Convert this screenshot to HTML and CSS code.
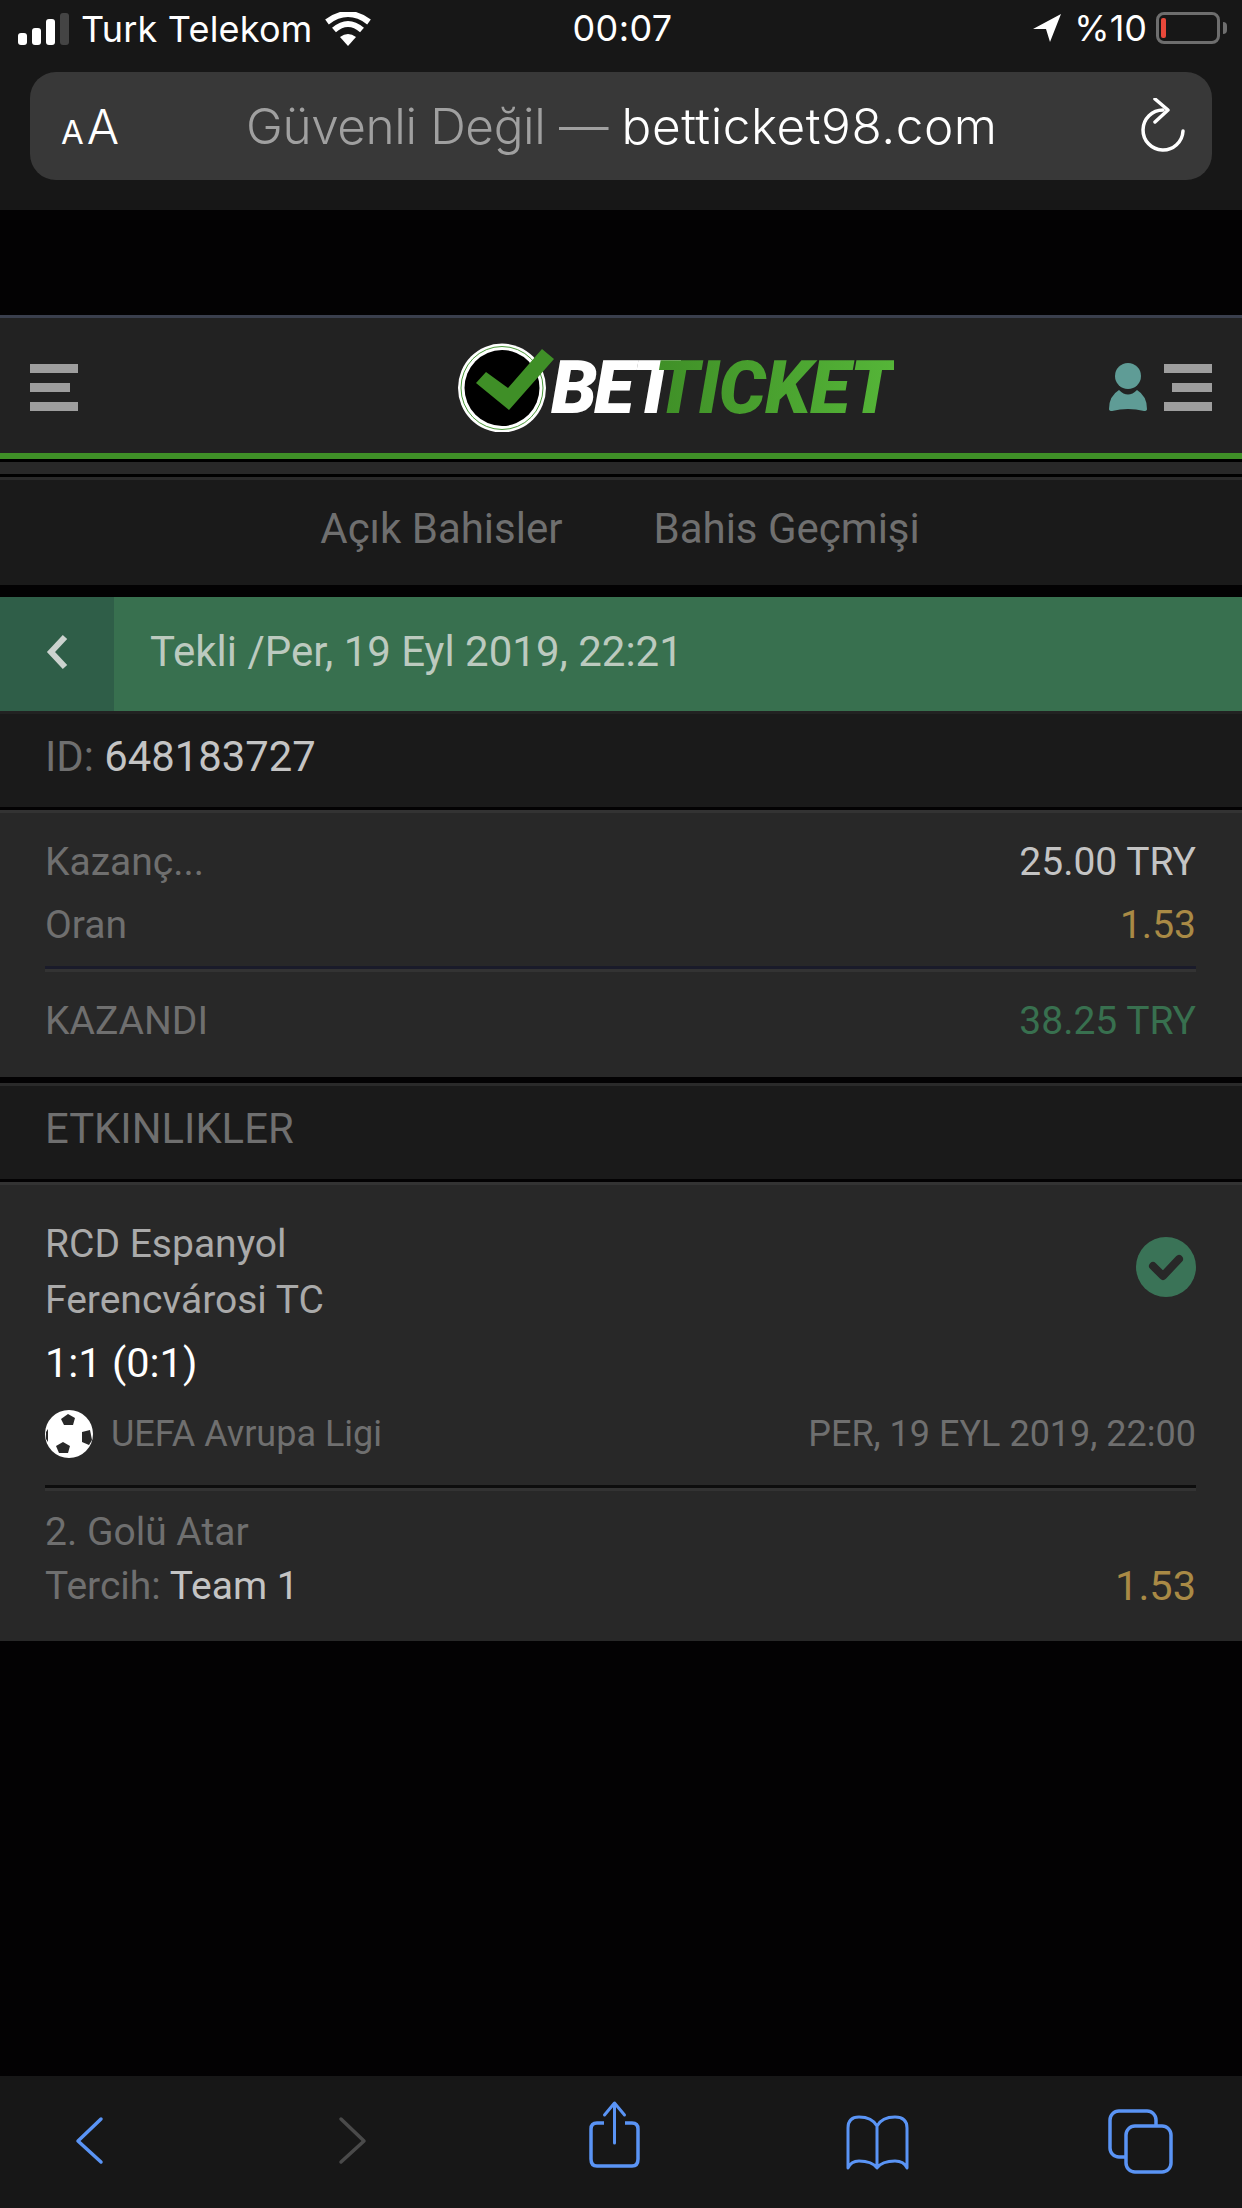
FILE: index.html
```html
<!DOCTYPE html>
<html lang="tr">
<head>
    <meta charset="UTF-8">
    <meta name="viewport" content="width=device-width, initial-scale=1.0">
    <title>Betticket</title>
    <link rel="stylesheet" href="styles.css">
</head>
<body>

    <!-- Safari top bar -->
    <div class="browser-top">
        <div class="status-bar">
            <div class="status-left">
                <svg class="signal" width="52" height="32" viewBox="0 0 52 32">
                    <rect x="0" y="20" width="9" height="12" rx="3" fill="#fff"/>
                    <rect x="14" y="15" width="9" height="17" rx="3" fill="#fff"/>
                    <rect x="28" y="6" width="9" height="26" rx="3" fill="#fff"/>
                    <rect x="42" y="0" width="9" height="32" rx="3" fill="#444"/>
                </svg>
                <span class="carrier">Turk Telekom</span>
                <svg class="wifi" width="46" height="34" viewBox="0 0 46 34">
                    <path d="M23 34 L15 25 Q23 19 31 25 Z" fill="#fff"/>
                    <path d="M9 18 Q23 6 37 18" fill="none" stroke="#fff" stroke-width="6"/>
                    <path d="M2 10 Q23 -6 44 10" fill="none" stroke="#fff" stroke-width="6"/>
                </svg>
            </div>
            <div class="status-time">00:07</div>
            <div class="status-right">
                <svg width="28" height="28" viewBox="0 0 28 28"><path d="M0 15 L28 0 L17 28 L13 15 Z" fill="#fff"/></svg>
                <span class="battery-text">%10</span>
                <div class="battery"><div class="battery-level"></div></div>
                <div class="battery-nub"></div>
            </div>
        </div>
        <div class="url-bar">
            <span class="text-size"><span class="small-a">A</span>A</span>
            <span class="url-text">Güvenli Değil — <span class="url-host">betticket98.com</span></span>
            <svg class="reload" width="48" height="56" viewBox="0 0 48 56">
                <path d="M25 12 A20 20 0 1 0 45 33" fill="none" stroke="#fff" stroke-width="3.5" stroke-linecap="round"/>
                <path d="M17 1 L30 12 L17 24" fill="none" stroke="#fff" stroke-width="3.5" stroke-linecap="round" stroke-linejoin="round"/>
            </svg>
        </div>
    </div>

    <!-- Site header -->
    <header class="site-header">
        <div class="burger">
            <span></span>
            <span class="short"></span>
            <span></span>
        </div>
        <div class="logo">
            <svg class="logo-mark" width="98" height="89" viewBox="0 0 98 89">
                <ellipse cx="44" cy="45" rx="44" ry="44.5" fill="#fff"/>
                <ellipse cx="44" cy="45" rx="41" ry="41.5" fill="none" stroke="#4b9a3a" stroke-width="1"/>
                <ellipse cx="44" cy="45" rx="37.5" ry="38" fill="#000"/>
                <path d="M18 40 L28 29 L50 45 L84 6 L96 16 L51 67 Z" fill="#3f8f27"/>
            </svg>
            <span class="logo-text"><span class="logo-bet">BET</span><span class="logo-ticket">TICKET</span></span>
        </div>
        <div class="header-right">
            <svg width="38" height="48" viewBox="0 0 38 48">
                <ellipse cx="19" cy="13" rx="13" ry="13" fill="#5f9c96"/>
                <path d="M10 27 Q19 36 28 27 Q38 33 38 46 Q38 48 35 48 Q19 44 3 48 Q0 48 0 46 Q0 33 10 27 Z" fill="#5f9c96"/>
            </svg>
            <div class="burger">
                <span></span>
                <span class="short right"></span>
                <span></span>
            </div>
        </div>
    </header>
    <div class="header-strip"></div>

    <nav class="tabs">
        <span>Açık Bahisler</span>
        <span>Bahis Geçmişi</span>
    </nav>

    <div class="title-bar">
        <div class="back-btn">
            <svg width="24" height="38" viewBox="0 0 24 38"><path d="M19 4 L5 19 L19 34" fill="none" stroke="#ccd3cf" stroke-width="6"/></svg>
        </div>
        <div class="title-text">Tekli /Per, 19 Eyl 2019, 22:21</div>
    </div>

    <div class="dark-row"><span class="muted">ID:</span> <span class="light">648183727</span></div>

    <!-- Bet summary -->
    <section class="panel summary">
        <div class="line"><span class="muted">Kazanç...</span><span class="light">25.00 TRY</span></div>
        <div class="line"><span class="muted">Oran</span><span class="gold">1.53</span></div>
        <div class="divider"></div>
        <div class="line result"><span class="muted">KAZANDI</span><span class="green">38.25 TRY</span></div>
    </section>

    <div class="dark-row section-head"><span class="muted">ETKINLIKLER</span></div>

    <!-- Event -->
    <section class="panel event">
        <div class="event-head">
            <div>
                <div class="team">RCD Espanyol</div>
                <div class="team">Ferencvárosi TC</div>
                <div class="score">1:1 (0:1)</div>
            </div>
            <svg class="won-icon" width="60" height="60" viewBox="0 0 60 60">
                <circle cx="30" cy="30" r="30" fill="#3a7357"/>
                <path d="M17 29 L27 39 L43 22" fill="none" stroke="#282828" stroke-width="8" stroke-linecap="round" stroke-linejoin="round"/>
            </svg>
        </div>
        <div class="league-row">
            <div class="league">
                <svg width="48" height="48" viewBox="0 0 48 48">
                    <circle cx="24" cy="24" r="24" fill="#fff"/>
                    <path d="M16 9 L23 4 L30 8 L28 15 L19 15 Z" fill="#282828"/>
                    <path d="M11 36 L18 32 L25 36 L23 43 L14 43 Z" fill="#282828"/>
                    <path d="M37 22 L45 20 L47 30 L44 35 L37 32 Z" fill="#282828"/>
                    <path d="M1 22 L3 19 L3 32 L1 29 Z" fill="#282828"/>
                </svg>
                <span>UEFA Avrupa Ligi</span>
            </div>
            <span class="muted date">PER, 19 EYL 2019, 22:00</span>
        </div>
        <div class="divider dark"></div>
        <div class="market">
            <div class="muted">2. Golü Atar</div>
            <div class="line pick"><span><span class="muted">Tercih:</span> <span class="light">Team 1</span></span><span class="gold big">1.53</span></div>
        </div>
    </section>

    <!-- Safari bottom bar -->
    <footer class="toolbar">
        <svg width="80" height="80" viewBox="0 0 80 80"><path d="M52 19 L29 41 L52 62" fill="none" stroke="#5a94f5" stroke-width="3.5" stroke-linecap="round" stroke-linejoin="round"/></svg>
        <svg width="80" height="80" viewBox="0 0 80 80"><path d="M29 19 L52 41 L29 62" fill="none" stroke="#4a4a4a" stroke-width="3.5" stroke-linecap="round" stroke-linejoin="round"/></svg>
        <svg width="80" height="80" viewBox="0 0 80 80">
            <path d="M29 23 H22 Q16 23 16 29 V59 Q16 66 22 66 H57 Q63 66 63 59 V29 Q63 23 57 23 H50" fill="none" stroke="#5a94f5" stroke-width="3.5"/>
            <path d="M39.500 4 V43 M29.500 15 L39.500 3 L49.500 15" fill="none" stroke="#5a94f5" stroke-width="3" stroke-linecap="round" stroke-linejoin="round"/>
        </svg>
        <svg width="80" height="80" viewBox="0 0 80 80">
            <path d="M40 26 Q35 17 22 17 Q11 17 11 28 V68 Q14 61 22 61 Q35 61 40 68 Q45 61 58 61 Q67 61 70 68 V28 Q70 17 58 17 Q45 17 40 26 Z M40 26 V66" fill="none" stroke="#5a94f5" stroke-width="3" stroke-linejoin="round"/>
        </svg>
        <svg width="80" height="80" viewBox="0 0 80 80">
            <rect x="10" y="11" width="46" height="46" rx="9" fill="none" stroke="#5a94f5" stroke-width="3.5"/>
            <rect x="26" y="26" width="45" height="46" rx="9" fill="#171717" stroke="#5a94f5" stroke-width="3.5"/>
        </svg>
    </footer>

</body>
</html>
```

FILE: styles.css
```css
:root {
    --panel: #282828;
    --row: #1a1a1a;
    --muted: #6f6f6f;
    --light: #c4c4c4;
    --gold: #a98a45;
    --green: #38704f;
    --blue: #5a94f5;
}

* {
    box-sizing: border-box;
}

body {
    margin: 0;
    height: 100vh;
    display: flex;
    flex-direction: column;
    background-color: #030203;
    font-family: Roboto, "Liberation Sans", sans-serif;
    font-size: 39px;
    color: var(--muted);
    overflow: hidden;
}

/* Safari top bar */
.browser-top {
    height: 210px;
    margin-bottom: 105px;
    background-color: #171717;
    padding: 0 30px;
    font-family: Inter, Roboto, sans-serif;
    color: #fff;
    flex-shrink: 0;
}

.status-bar {
    height: 56px;
    margin: 0 -30px 16px;
    padding: 0 15px 0 18px;
    display: grid;
    grid-template-columns: 1fr auto 1fr;
    align-items: center;
    font-size: 36px;
}

.status-left {
    display: flex;
    align-items: center;
    padding-top: 2px;
}

.carrier {
    margin-left: 11px;
    margin-right: 13px;
    letter-spacing: 0.2px;
}

.status-time {
    letter-spacing: 0.4px;
}

.status-right {
    display: flex;
    align-items: center;
    justify-content: flex-end;
}

.battery-text {
    margin-left: 13px;
    margin-right: 9px;
}

.battery {
    width: 64px;
    height: 32px;
    border: 3px solid #6e6e6e;
    border-radius: 8px;
    padding: 3px 2px;
}

.battery-level {
    width: 5px;
    height: 100%;
    background-color: #e8483a;
    border-radius: 2px;
}

.battery-nub {
    width: 4px;
    height: 12px;
    margin-left: 3px;
    background-color: #6e6e6e;
    border-radius: 0 4px 4px 0;
}

.url-bar {
    height: 108px;
    background-color: #383838;
    border-radius: 26px;
    display: flex;
    align-items: center;
    padding: 0 26px 0 31px;
}

.text-size {
    font-size: 48px;
    font-weight: 300;
    width: 185px;
}

.small-a {
    font-size: 33px;
    font-weight: 400;
    margin-right: 3px;
}

.url-text {
    font-size: 49.5px;
    font-weight: 300;
    letter-spacing: -0.4px;
    color: #a0a0a0;
    flex: 1;
    white-space: nowrap;
}

.url-host {
    color: #fff;
    letter-spacing: 0.55px;
}

/* Site header */
.site-header {
    height: 138px;
    border-top: 3px solid #3a3f4d;
    background-color: #222;
    display: flex;
    align-items: center;
    padding: 3px 30px 0;
    flex-shrink: 0;
}

.burger {
    width: 48px;
    display: flex;
    flex-direction: column;
    gap: 10px;
}

.burger span {
    display: block;
    height: 9px;
    background-color: #9e9e9e;
}

.burger .short {
    width: 40px;
}

.burger .short.right {
    margin-left: 8px;
}

.logo {
    display: flex;
    align-items: center;
    margin-left: 380px;
}

.logo-mark {
    position: relative;
    z-index: 1;
}

.logo-text {
    margin-left: -5px;
    font-size: 74px;
    line-height: 89px;
    font-weight: 900;
    font-style: italic;
    letter-spacing: -3.2px;
    white-space: nowrap;
}

.logo-bet {
    color: #fff;
}

.logo-ticket {
    margin-left: -20px;
    letter-spacing: -1px;
    background: linear-gradient(90deg, #3f8f27, #55b538);
    -webkit-background-clip: text;
    background-clip: text;
    color: transparent;
}

.header-right {
    margin-left: auto;
    display: flex;
    align-items: center;
    gap: 17px;
}

.header-strip {
    height: 27px;
    flex-shrink: 0;
    border-top: 6px solid #3f8f27;
    background: linear-gradient(#000 3px, var(--panel) 3px, var(--panel) 15px, #000 15px, #000 18px, #2a2a2a 18px);
}

/* Tabs */
.tabs {
    height: 105px;
    background-color: var(--row);
    display: flex;
    justify-content: center;
    align-items: center;
    gap: 91px;
    font-size: 42px;
    flex-shrink: 0;
    padding: 0 2px 8px 0;
}

.title-bar {
    height: 114px;
    margin-top: 12px;
    background-color: #38704f;
    display: flex;
    align-items: center;
    font-size: 42px;
    color: #bccabf;
    flex-shrink: 0;
}

.back-btn {
    width: 114px;
    height: 100%;
    background-color: #2f5e48;
    display: flex;
    align-items: center;
    padding: 0 0 4px 46px;
}

.title-text {
    margin: 0 0 5px 36px;
}

/* Rows */
.dark-row {
    height: 99px;
    border-top: 3px solid #222;
    border-bottom: 3px solid #030203;
    background-color: var(--row);
    padding: 19px 46px 0 45px;
    font-size: 41.8px;
    line-height: 48px;
    flex-shrink: 0;
}

.muted {
    color: var(--muted);
}

.light {
    color: var(--light);
}

.gold {
    color: var(--gold);
}

.green {
    color: var(--green);
}

.panel {
    border-top: 3px solid #333;
    background-color: var(--panel);
    padding: 0 46px 0 45px;
    flex-shrink: 0;
}

.line {
    display: flex;
    justify-content: space-between;
    height: 63px;
    line-height: 63px;
}

.summary {
    height: 267px;
    padding-top: 18px;
}

.divider {
    height: 6px;
    margin-top: 9px;
    border-top: 3px solid #1a1b2a;
    border-bottom: 3px solid #333;
}

.divider.dark {
    margin-top: 27px;
    border-top-color: #0d0d0d;
}

.result {
    margin-top: 18px;
}

.section-head {
    height: 99px;
    margin-top: 6px;
    border-top: 3px solid #2a2a2a;
}

/* Event */
.event {
    height: 459px;
    padding-top: 31px;
}

.event-head {
    display: flex;
    justify-content: space-between;
    align-items: flex-start;
}

.team {
    height: 56px;
    line-height: 56px;
    color: #aaa;
}

.score {
    margin-top: 3px;
    height: 64px;
    line-height: 64px;
    font-size: 41.5px;
    color: #fff;
}

.won-icon {
    margin-top: 21px;
}

.league-row {
    margin-top: 15px;
    display: flex;
    justify-content: space-between;
    align-items: center;
    height: 48px;
    font-size: 36px;
}

.league {
    display: flex;
    align-items: center;
    gap: 18px;
}

.market {
    padding-top: 14px;
    line-height: 54px;
}

.pick {
    height: 54px;
    line-height: 54px;
}

.big {
    font-size: 41.5px;
}

/* Safari bottom bar */
.toolbar {
    margin-top: auto;
    height: 132px;
    background-color: #171717;
    display: flex;
    justify-content: space-between;
    padding: 24px 62px 0 49px;
    flex-shrink: 0;
}
```
